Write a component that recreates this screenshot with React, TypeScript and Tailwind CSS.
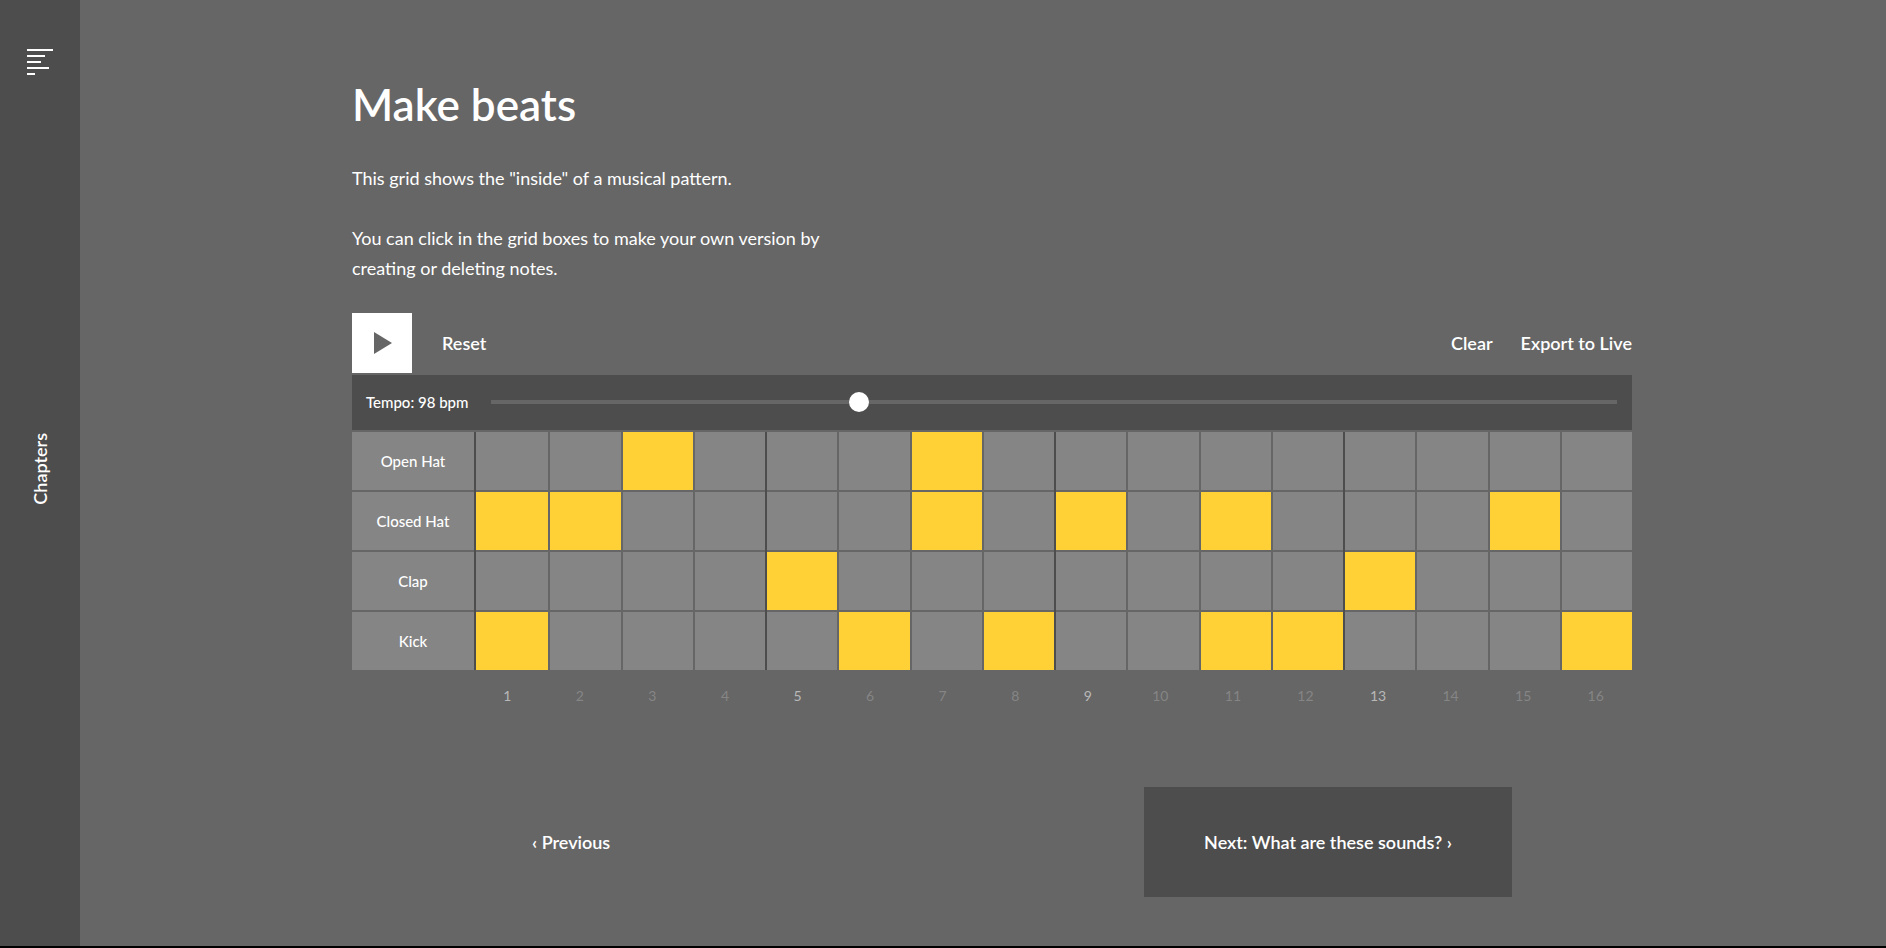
import { useState } from "react";
import type { ChangeEvent } from "react";

const STEPS = Array.from({ length: 16 }, (_, i) => i + 1);

const TRACKS = ["Open Hat", "Closed Hat", "Clap", "Kick"];

const INITIAL_PATTERN: Record<string, number[]> = {
	"Open Hat": [3, 7],
	"Closed Hat": [1, 2, 7, 9, 11, 15],
	"Clap": [5, 13],
	"Kick": [1, 6, 8, 11, 12, 16]
};

const EMPTY_PATTERN: Record<string, number[]> = {
	"Open Hat": [],
	"Closed Hat": [],
	"Clap": [],
	"Kick": []
};

const isDownbeat = (step: number) => step % 4 === 1;

function Sidebar() {
	return (
		<nav className="relative w-20 shrink-0 bg-[#4d4d4d] flex flex-col items-center justify-center pb-2">
			<button type="button" aria-label="Menu" className="absolute top-[49px] left-[27px] cursor-pointer">
				<svg width="26" height="26" viewBox="0 0 26 26" fill="white" shapeRendering="crispEdges">
					<rect x="0" y="0" width="26" height="2" />
					<rect x="0" y="6" width="18" height="2" />
					<rect x="0" y="12" width="14" height="2" />
					<rect x="0" y="18" width="22" height="2" />
					<rect x="0" y="24" width="8" height="2" />
				</svg>
			</button>
			<a href="#chapters" className="text-lg leading-6 font-semibold rotate-180 [writing-mode:vertical-rl]">
				Chapters
			</a>
		</nav>
	);
}

export default function App() {
	const [pattern, setPattern] = useState(INITIAL_PATTERN);
	const [tempo, setTempo] = useState<number>(98);
	const [playing, setPlaying] = useState<boolean>(false);

	const toggleStep = (track: string, step: number) => {
		setPattern(prev => ({
			...prev,
			[track]: prev[track].includes(step)
				? prev[track].filter(s => s !== step)
				: [...prev[track], step]
		}));
	};

	const handleTempo = (e: ChangeEvent<HTMLInputElement>) => {
		setTempo(Number(e.target.value));
	};

	return (
		<div className="min-h-screen flex bg-[#666666] border-b-2 border-black text-white font-['Lato','Liberation_Sans',sans-serif]">
			<Sidebar />
			<main className="flex-1 min-w-0 pl-[18px]">
				<div className="max-w-7xl mx-auto pt-[76px] pb-12">
					<h1 className="text-[44px] leading-[56px] font-semibold">Make beats</h1>

					<div className="mt-[31px] max-w-[480px] text-lg leading-[30px]">
						<p>This grid shows the "inside" of a musical pattern.</p>
						<p className="mt-[30px]">
							You can click in the grid boxes to make your own version by creating or deleting notes.
						</p>
					</div>

					{/* transport */}
					<div className="mt-[30px] flex items-center text-lg font-semibold">
						<button
							type="button"
							aria-label={playing ? "Stop" : "Play"}
							onClick={() => setPlaying(!playing)}
							className="size-[60px] bg-white flex items-center justify-center pl-0.5 cursor-pointer"
						>
							<svg width="18" height="22" viewBox="0 0 18 22" fill="#666666">
								{playing ? <rect y="2" width="18" height="18" /> : <path d="M0 0L18 11L0 22Z" />}
							</svg>
						</button>
						<button type="button" onClick={() => setPattern(INITIAL_PATTERN)} className="ml-[30px] cursor-pointer">
							Reset
						</button>
						<button type="button" onClick={() => setPattern(EMPTY_PATTERN)} className="ml-auto cursor-pointer">
							Clear
						</button>
						<a href="#export" className="ml-7">Export to Live</a>
					</div>

					{/* tempo */}
					<div className="mt-0.5 h-[55px] flex items-center bg-[#4d4d4d] pl-[14px] pr-[15px] pb-0.5">
						<label htmlFor="tempo" className="w-[125px] shrink-0 text-[15px] leading-5 font-medium">
							Tempo: {tempo} bpm
						</label>
						<input
							id="tempo"
							type="range"
							min={30}
							max={240}
							value={tempo}
							onChange={handleTempo}
							className="flex-1 min-w-0 h-5 appearance-none bg-transparent cursor-pointer [&::-webkit-slider-runnable-track]:h-1 [&::-webkit-slider-runnable-track]:bg-[#666666] [&::-webkit-slider-thumb]:appearance-none [&::-webkit-slider-thumb]:size-5 [&::-webkit-slider-thumb]:-mt-2 [&::-webkit-slider-thumb]:rounded-full [&::-webkit-slider-thumb]:bg-white"
						/>
					</div>

					{/* grid */}
					<div className="mt-0.5 flex">
						<div className="w-[122px] shrink-0 flex flex-col gap-0.5">
							{TRACKS.map(track => (
								<div key={track} className="h-[58px] bg-[#858585] flex items-center justify-center text-[15px] leading-5 font-medium">
									{track}
								</div>
							))}
						</div>
						{STEPS.map(step => (
							<div
								key={step}
								className={`grow flex flex-col gap-0.5 border-l-2 ${step === 1 ? "basis-1" : "basis-0.5"} ${isDownbeat(step) ? "border-[#4d4d4d]" : "border-[#666666]"}`}
							>
								{TRACKS.map(track => (
									<button
										key={track}
										type="button"
										aria-label={`${track} ${step}`}
										aria-pressed={pattern[track].includes(step)}
										onClick={() => toggleStep(track, step)}
										className={`h-[58px] cursor-pointer ${pattern[track].includes(step) ? "bg-[#ffd136]" : "bg-[#858585]"}`}
									/>
								))}
							</div>
						))}
					</div>
					<div className="mt-4 pl-[119px] flex text-sm leading-5">
						{STEPS.map(step => (
							<span
								key={step}
								className={`flex-1 text-center ${isDownbeat(step) ? "text-[#b8b8b8]" : "text-[#858585]"}`}
							>
								{step}
							</span>
						))}
					</div>

					{/* pager */}
					<div className="mt-[81px] px-[120px] flex items-center justify-between text-lg font-semibold">
						<a href="#previous" className="h-[110px] px-[60px] flex items-center">‹ Previous</a>
						<a href="#next" className="h-[110px] w-[368px] flex items-center justify-center bg-[#4d4d4d]">
							Next: What are these sounds? ›
						</a>
					</div>
				</div>
			</main>
		</div>
	);
}
